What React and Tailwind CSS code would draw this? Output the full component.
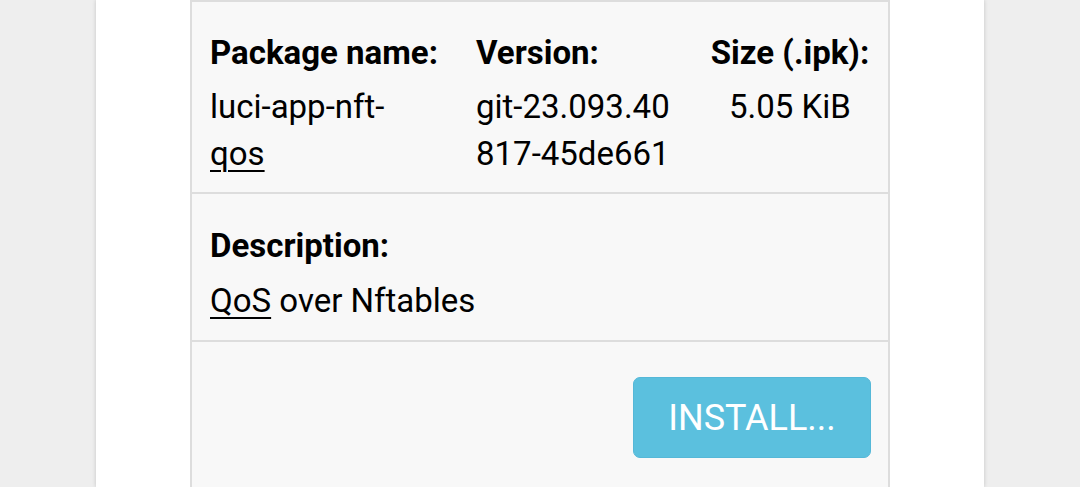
export default function App() {
  return (
    <div
      className="min-h-screen bg-[#eeeeee] px-[96px] text-[33px] leading-[47px] text-black"
      style={{ fontFamily: "Roboto, 'Liberation Sans', sans-serif" }}
    >
      <div className="h-[487px] overflow-hidden bg-white px-[94px] shadow-[0_0_4px_rgba(0,0,0,0.18)]">
        <div className="border-x-2 border-[#dddddd] bg-[#f8f8f8]">
          {/* Package row */}
          <div className="flex gap-[36px] border-t-2 border-[#dddddd] px-[18px] pt-[27px] pb-[15px]">
            <div className="w-[230px] shrink-0">
              <div className="font-bold whitespace-nowrap">Package name:</div>
              <div className="mt-[7px] w-[224px]">
                luci-app-nft-<span className="underline underline-offset-[5px] decoration-[2px]">qos</span>
              </div>
            </div>
            <div className="w-[198px] shrink-0">
              <div className="font-bold">Version:</div>
              <div className="mt-[7px] break-all">git-23.093.40817-45de661</div>
            </div>
            <div className="w-[160px] shrink-0 text-center">
              <div className="font-bold whitespace-nowrap">Size (.ipk):</div>
              <div className="mt-[7px]">5.05 KiB</div>
            </div>
          </div>

          {/* Description row */}
          <div className="border-t-2 border-[#dddddd] px-[18px] pt-[28px] pb-[16px]">
            <div className="font-bold">Description:</div>
            <div className="mt-[8px]">
              <span className="underline underline-offset-[5px] decoration-[2px]">QoS</span> over Nftables
            </div>
          </div>

          {/* Actions row */}
          <div className="flex h-[200px] justify-end border-t-2 border-[#dddddd] pt-[35px] pr-[17px]">
            <button className="h-[81px] w-[238px] rounded-[7px] border border-[#55b8d8] bg-[#5bc0de] text-[36px] font-normal leading-none text-white">
              INSTALL...
            </button>
          </div>
        </div>
      </div>
    </div>
  );
}
